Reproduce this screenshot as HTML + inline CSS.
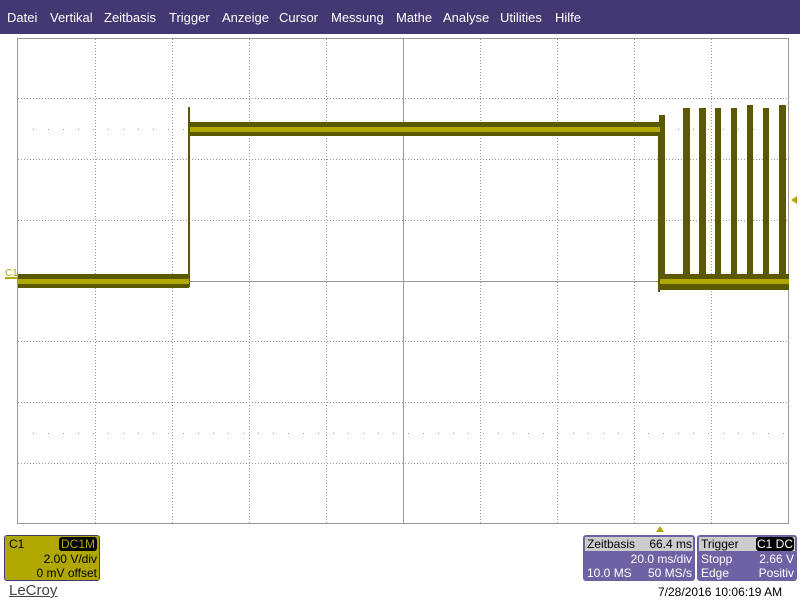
<!DOCTYPE html><html><head><style>
body{margin:0;width:800px;height:600px;background:#fff;position:relative;overflow:hidden;font-family:"Liberation Sans",sans-serif}
.menu{position:absolute;left:0;top:0;width:800px;height:34px;background:#433872;color:#fff;font-size:13px}
.menu span{position:absolute;top:10px}
.p{position:absolute;box-sizing:border-box;border:1px solid #6a5fa0;border-radius:3px;font-size:12px;line-height:14px}
.t{position:absolute;white-space:nowrap}
</style></head><body>
<div class="menu">
<span style="left:7px">Datei</span><span style="left:50px">Vertikal</span><span style="left:104px">Zeitbasis</span><span style="left:169px">Trigger</span><span style="left:222px">Anzeige</span><span style="left:279px">Cursor</span><span style="left:331px">Messung</span><span style="left:396px">Mathe</span><span style="left:443px">Analyse</span><span style="left:500px">Utilities</span><span style="left:555px">Hilfe</span>
</div>
<svg style="position:absolute;left:0;top:0" width="800" height="600">
<g stroke="#999" stroke-dasharray="1,2" stroke-width="1">
<line x1="95.5" y1="39" x2="95.5" y2="523"/><line x1="172.5" y1="39" x2="172.5" y2="523"/><line x1="249.5" y1="39" x2="249.5" y2="523"/><line x1="326.5" y1="39" x2="326.5" y2="523"/>
<line x1="480.5" y1="39" x2="480.5" y2="523"/><line x1="557.5" y1="39" x2="557.5" y2="523"/><line x1="634.5" y1="39" x2="634.5" y2="523"/><line x1="711.5" y1="39" x2="711.5" y2="523"/>
<line x1="18" y1="98.5" x2="789" y2="98.5"/><line x1="18" y1="159.5" x2="789" y2="159.5"/><line x1="18" y1="220.5" x2="789" y2="220.5"/>
<line x1="18" y1="341.5" x2="789" y2="341.5"/><line x1="18" y1="402.5" x2="789" y2="402.5"/><line x1="18" y1="463.5" x2="789" y2="463.5"/>
</g>
<g stroke="#999" stroke-dasharray="1,14" stroke-width="1">
<line x1="33" y1="129.5" x2="789" y2="129.5"/><line x1="33" y1="433.5" x2="789" y2="433.5"/>
</g>
<line x1="403.5" y1="39" x2="403.5" y2="523" stroke="#999"/>
<line x1="18" y1="281.5" x2="789" y2="281.5" stroke="#999"/>
<rect x="17.5" y="38.5" width="771" height="485" fill="none" stroke="#999"/>
<g fill="#5a5800">
<rect x="18" y="274" width="171" height="14"/>
<rect x="188" y="107" width="2" height="180"/>
<rect x="189" y="122" width="472" height="14"/>
<rect x="658" y="122" width="2" height="170"/>
<rect x="658" y="274" width="131" height="16"/>
<rect x="659" y="115" width="6" height="170"/><rect x="683" y="108" width="7" height="175"/><rect x="699" y="108" width="7" height="175"/><rect x="715" y="108" width="6" height="175"/><rect x="731" y="108" width="6" height="175"/><rect x="747" y="105" width="6" height="178"/><rect x="763" y="108" width="6" height="175"/><rect x="779" y="105" width="7" height="178"/>
</g>
<g fill="#b0a800">
<rect x="18" y="279" width="171" height="5"/><rect x="190" y="127" width="470" height="5"/><rect x="660" y="279" width="129" height="5"/>
</g>
<g fill="#b0a800">
<rect x="5" y="277" width="12" height="2"/><text x="5" y="276" font-size="10" font-family="Liberation Sans">C1</text>
<polygon points="791,200 797,196 797,204"/>
<polygon points="660,526 656,532 664,532"/>
</g>
</svg>
<div class="p" style="left:4px;top:535px;width:96px;height:46px;background:#b0a800;border-color:#433872;color:#000">
<div class="t" style="left:4px;top:1px">C1</div>
<div class="t" style="right:2px;top:1px;background:#000;color:#b0a800;border-radius:3px;padding:0 2px">DC1M</div>
<div class="t" style="right:2px;top:16px">2.00 V/div</div>
<div class="t" style="right:2px;top:30px">0 mV offset</div>
</div>
<div class="t" style="left:9px;top:582px;font-size:15px;color:#444;text-decoration:underline">LeCroy</div>
<div class="p" style="left:583px;top:535px;width:112px;height:46px;background:#6e62a4;color:#fff">
<div class="t" style="left:1px;top:1px;right:1px;height:14px;background:#ccc;color:#000"><span style="position:absolute;left:2px">Zeitbasis</span><span style="position:absolute;right:1px">66.4 ms</span></div>
<div class="t" style="right:2px;top:16px">20.0 ms/div</div>
<div class="t" style="left:3px;top:30px">10.0 MS</div><div class="t" style="right:2px;top:30px">50 MS/s</div>
</div>
<div class="p" style="left:697px;top:535px;width:100px;height:46px;background:#6e62a4;color:#fff">
<div class="t" style="left:1px;top:1px;right:1px;height:14px;background:#ccc;color:#000"><span style="position:absolute;left:2px">Trigger</span><span style="position:absolute;right:1px;background:#000;color:#fff;border-radius:3px;padding:0 1px">C1 DC</span></div>
<div class="t" style="left:3px;top:16px">Stopp</div><div class="t" style="right:2px;top:16px">2.66 V</div>
<div class="t" style="left:3px;top:30px">Edge</div><div class="t" style="right:2px;top:30px">Positiv</div>
</div>
<div class="t" style="left:658px;top:585px;font-size:12px;color:#000">7/28/2016 10:06:19 AM</div>
</body></html>
